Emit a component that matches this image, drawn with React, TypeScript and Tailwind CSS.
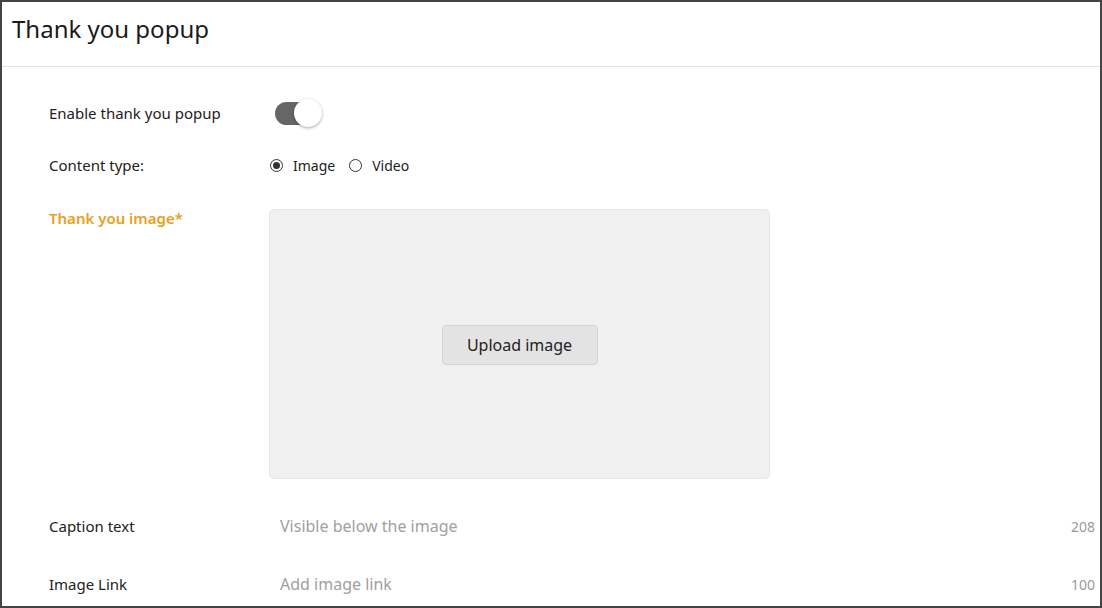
import React from "react";

const font = { fontFamily: '"Noto Sans", "Liberation Sans", sans-serif' };

const Radio: React.FC<{ checked?: boolean; label: string }> = ({ checked, label }) => (
  <label className="flex items-center gap-[10px] text-[14px] text-[#222]">
    <span className="w-[13px] h-[13px] rounded-full border-[1.5px] border-[#333] flex items-center justify-center">
      {checked && <span className="w-[7px] h-[7px] rounded-full bg-[#333]" />}
    </span>
    {label}
  </label>
);

const TextRow: React.FC<{ label: string; placeholder: string; count: number; className: string }> = ({
  label,
  placeholder,
  count,
  className,
}) => (
  <div className={`flex items-center h-[40px] ${className}`}>
    <div className="w-[220px] text-[15px] text-[#222]">{label}</div>
    <div className="flex-1 flex items-center pl-[11px] pr-[5px]">
      <input
        className="flex-1 outline-none bg-transparent text-[16px] placeholder:text-[#a0a0a0]"
        placeholder={placeholder}
        style={font}
      />
      <span className="text-[14px] text-[#9a9a9a]">{count}</span>
    </div>
  </div>
);

const App: React.FC = () => {
  return (
    <div className="w-full h-[608px] border-2 border-[#444] bg-white flex flex-col overflow-hidden" style={font}>
      {/* Header */}
      <div className="h-[65px] flex items-center px-[10px] border-b border-[#e3e3e3] shrink-0">
        <h1 className="text-[24px] text-[#1a1a1a] leading-none -mt-[10px]">Thank you popup</h1>
      </div>

      {/* Body */}
      <div className="flex flex-col pl-[47px]">
        <div className="flex items-center h-[28px] mt-[32px]">
          <div className="w-[220px] text-[15px] text-[#222]">Enable thank you popup</div>
          <div className="relative ml-[6px] w-[40px] h-[23px] rounded-full bg-[#666]">
            <span className="absolute -right-[7px] -top-[3px] w-[28px] h-[28px] rounded-full bg-white shadow-[0_1px_3px_rgba(0,0,0,0.35)]" />
          </div>
        </div>

        <div className="flex items-center h-[20px] mt-[28px]">
          <div className="w-[221px] text-[15px] text-[#222]">Content type:</div>
          <div className="flex items-center gap-[14px]">
            <Radio checked label="Image" />
            <Radio label="Video" />
          </div>
        </div>

        <div className="flex items-start mt-[34px]">
          <div className="w-[220px] text-[15px] leading-[18px] font-semibold text-[#e9a020]">Thank you image*</div>
          <div className="w-[501px] h-[270px] rounded-[5px] bg-[#f0f0f0] border border-[#e6e6e6] flex items-center justify-center">
            <button className="w-[156px] h-[40px] rounded-[4px] bg-[#e3e3e3] border border-[#d4d4d4] text-[16px] text-[#222] mt-[2px]">
              Upload image
            </button>
          </div>
        </div>

        <TextRow label="Caption text" placeholder="Visible below the image" count={208} className="mt-[27px]" />
        <TextRow label="Image Link" placeholder="Add image link" count={100} className="mt-[18px]" />
      </div>
    </div>
  );
};

export default App;
